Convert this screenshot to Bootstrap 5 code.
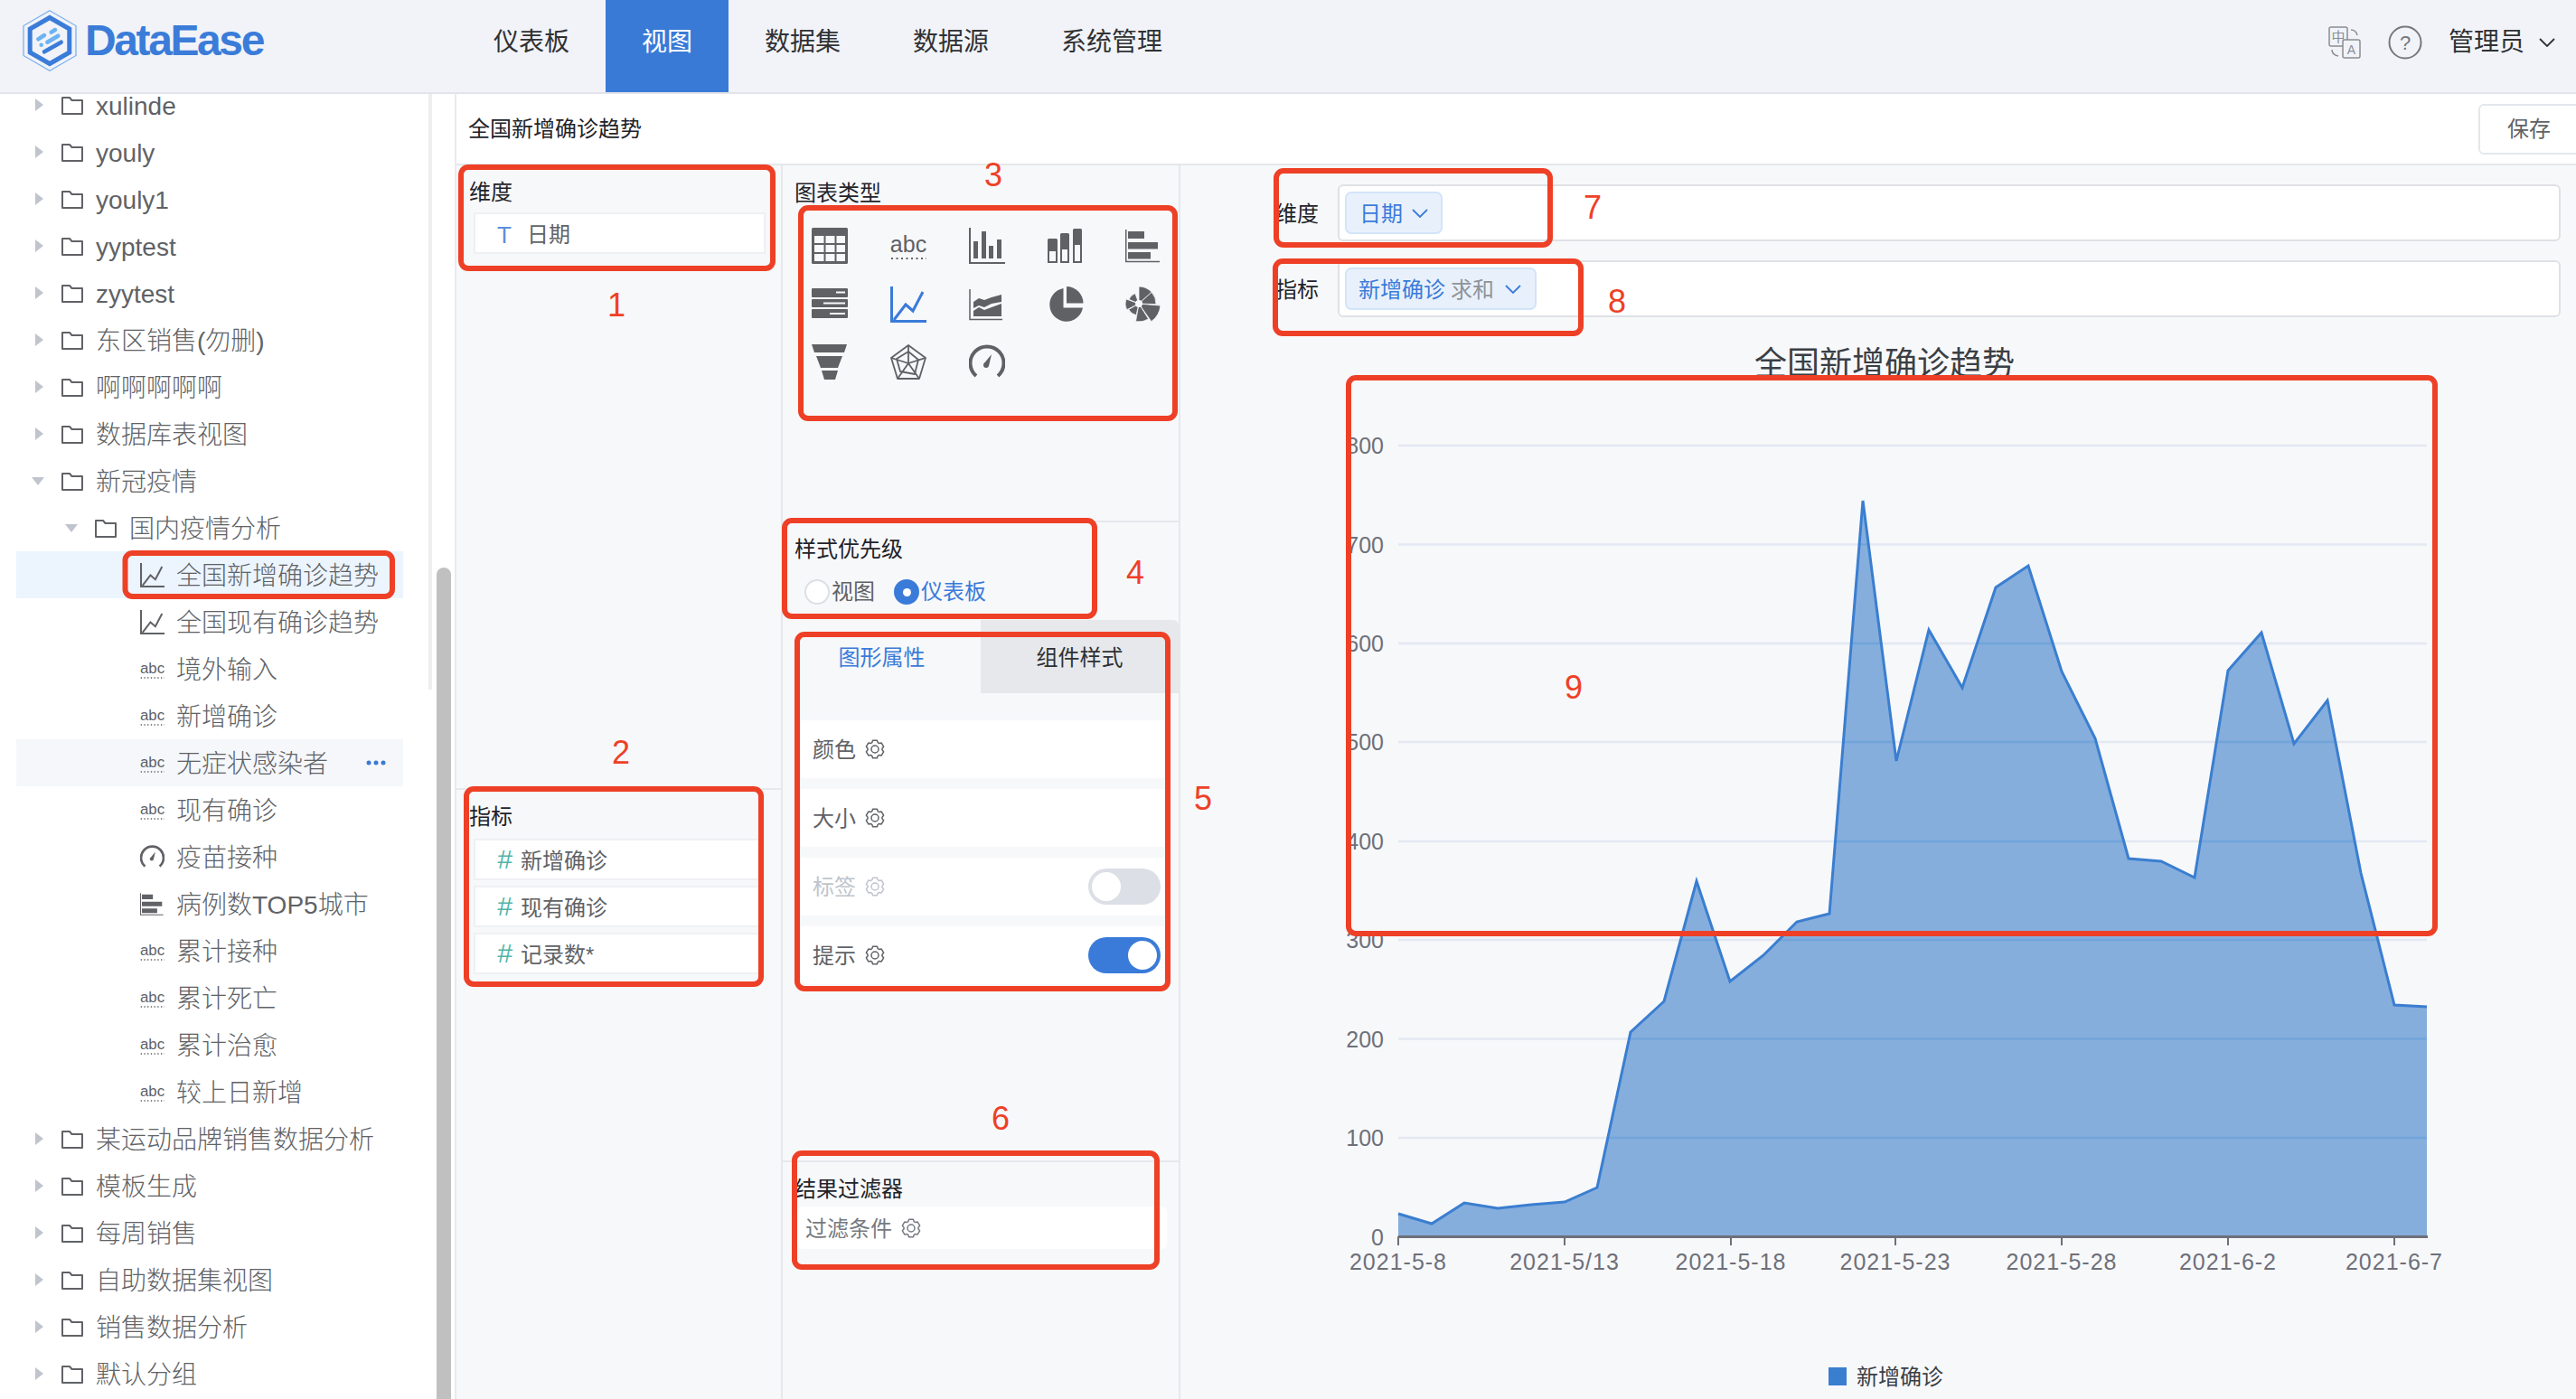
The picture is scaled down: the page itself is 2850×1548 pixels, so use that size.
<!DOCTYPE html>
<html lang="zh-CN">
<head>
<meta charset="utf-8">
<title>DataEase</title>
<link href="https://cdn.jsdelivr.net/npm/bootstrap@5.3.0/dist/css/bootstrap.min.css" rel="stylesheet">
<style>
html,body{height:1548px;width:2850px;overflow:hidden;margin:0}
body{position:relative;font-family:"Liberation Sans","Noto Sans CJK SC",sans-serif;font-size:24px;color:#1f2329;background:#fff}
.hdr{height:104px;background:#f1f3f8;border-bottom:2px solid #e2e4e9;padding:0;justify-content:flex-start}
.brand{width:506px;flex:none;height:102px;padding:0 0 13px 25px;gap:9px}
.brand-name{font-family:"Liberation Sans",sans-serif;font-weight:700;font-size:48px;letter-spacing:-2.4px;color:#3b7cd9;line-height:1;white-space:nowrap}
.hdr .navbar-nav .nav-link{height:102px;padding:0 40px 8px;font-size:28px;color:#303133;display:flex;align-items:center}
.hdr .navbar-nav .nav-link.active{background:#3a7ad7;color:#fff}
.hdr-right{margin-left:auto;padding:0 23px 8px 0;font-size:28px;color:#303133}
.ico-lang{margin-right:30px}
.ico-help{margin-right:29px}
.stage{height:1444px}
.side{width:505px;flex:none;overflow:hidden;background:#fff;border-right:2px solid #e8eaee}
.tree{width:474px;flex:none;padding:0 28px 0 18px;margin-top:-14px;height:1600px}
.tree .list-group-item{height:52px;padding:3px 0 0;border:0;background:transparent;color:#606266;font-size:28px;font-weight:300;display:flex;align-items:center;border-radius:0;white-space:nowrap}
.tree .list-group-item.is-sel{background:#ecf4fd}
.tree .list-group-item.is-hov{background:#f5f7fa}
.tree .lv0{padding-left:21px}
.tree .lv1{padding-left:58px}
.tree .lv2{padding-left:137px}
.tw{width:29px;flex:none;display:flex;margin-bottom:3px}
.tw.open svg{margin-left:-4px}
.fd{width:24px;height:21px;margin:0 14px 3px 0;flex:none;color:#606266}
.tk{width:27px;height:27px;margin:0 13px 3px 0;flex:none;color:#606266}
.dots{margin:0 19px 3px auto;width:22px;height:6px;color:#3a7ad7}
.gutter{flex:1;position:relative;padding:524px 0 0 9px}
.gutter::before{content:"";position:absolute;left:0;top:0;width:4px;height:659px;background:#eeeff1}
.sbar{display:block;width:16px;height:920px;background:#c0c0c0;border-radius:8px 8px 0 0}
.work{flex:1;min-width:0}
.titlebar{height:79px;flex:none;background:#fff;border-bottom:2px solid #e6e7ea;padding-left:13px;overflow:hidden}
.savebtn{margin:0 -12px 0 auto;width:120px;height:56px;padding:0 0 0 30px;text-align:left;background:#fff;border:2px solid #e4e7ed;border-radius:6px;color:#606266;font-size:24px;line-height:1}
.panes{flex:1;min-height:0;background:#f7f8fa}
.pane-fields{width:361px;flex:none;border-right:2px solid #e6e8ec}
.pane-types{width:440px;flex:none;border-right:2px solid #e6e8ec}
.pane-chart{flex:1;min-width:0}
.sec-a{height:691px;border-bottom:2px solid #e6e8ec;padding:12px 0 0 14px}
.sec-b{padding:12px 0 0 14px}
.cap{line-height:32px;height:32px;padding-top:2px;font-size:24px;color:#1f2329}
.fcard{width:318px;height:46px;margin-left:5px;background:#fff;border:2px solid #eef0f3;padding:3px 0 0 24px;color:#606266;line-height:1}
.fcard+.fcard{margin-top:6px}
.f1{margin-top:8px;width:323px}
.f2{margin-top:10px}
.ft{width:33px;flex:none;color:#5b8fd9;font-size:26px}
.fh{width:26px;flex:none;color:#4fb5a8;font-size:30px;font-style:italic;margin-bottom:3px}
.types{height:395px;border-bottom:2px solid #e6e8ec;padding:13px 0 0 13px}
.igrid{display:grid;grid-template-columns:repeat(5,86.75px);grid-auto-rows:64.5px;margin:12px 0 0 -4px;place-items:center}
.igrid svg{width:40px;height:40px;color:#5f6165}
.igrid svg.on{color:#3a7bd9}
.stylesec{height:708px;border-bottom:2px solid #e6e8ec;padding-top:12px}
.prio{padding-left:13px}
.radios{margin:19px 0 0 24px;height:28px;color:#606266;font-size:24px;line-height:1}
.rdo{width:28px;height:28px;border-radius:50%;flex:none;border:2px solid #dcdfe6;background:#fff;margin-right:2px}
.rdo.on{background:#3a7bd9;border-color:#3a7bd9;display:flex;align-items:center;justify-content:center}
.rdo.on::after{content:"";width:9px;height:9px;border-radius:50%;background:#fff}
.rtxt{margin-right:21px}
.rtxt-on{color:#3a7bd9}
.tabsbar{margin-top:17px;height:81px}
.tabsbar .nav-item{height:81px;line-height:32px;padding-top:26px;font-size:24px;text-align:center}
.tab-a{background:#f7f8fa;color:#3a7bd9;border-radius:6px 0 0 0}
.tab-b{background:#e6e8ec;color:#303133;border-radius:0 6px 0 0}
.props{padding:30px 14px 0 16px;display:flex;flex-direction:column;gap:12px}
.prop{height:64px;background:#fff;padding:2px 6px 0 17px;color:#606266;font-size:24px}
.prop.dim{color:#c0c4cc}
.gear{width:22px;height:22px;margin:0 0 2px 10px;flex:none}
.tgl{width:80px;height:40px;border-radius:20px;margin:0 0 2px auto;padding:0 4px;background:#dcdfe6;flex:none}
.tgl i{display:block;width:32px;height:32px;border-radius:50%;background:#fff}
.tgl.on{background:#3a7bd9;justify-content:flex-end}
.filters{padding:12px 0 0 13px}
.frow{height:47px;margin:5px 13px 0 3px;background:#fff;border-radius:6px;padding:2px 0 0 9px;color:#767a80}
.shelves{padding:21px 17px 0 105px}
.shelf{height:63px;line-height:1}
.shelf+.shelf{margin-top:21px}
.shelf-l{width:69px;flex:none;color:#1f2329;font-size:24px;padding-top:2px}
.shelf-b{flex:1;height:63px;background:#fff;border:2px solid #dfe1e6;border-radius:6px;padding:6px}
.pill{height:47px;background:#e8f1fb;border:2px solid #d3e4f9;border-radius:7px;color:#3a7bd9;font-size:24px;padding:2px 15px 0 13px;white-space:nowrap}
.pill small{font-size:24px;color:#909399;margin-left:6px}
.pill svg{width:18px;height:10px;margin:0 0 2px 12px}
.pill.p1{padding:2px 14px 0 14px}
.pill.p1 svg{margin-left:10px}
.plot{display:block;margin-top:19px;width:1544px;height:1178px}
.plot text{font-family:"Liberation Sans","Noto Sans CJK SC",sans-serif}
.marks{position:absolute;left:0;top:0;width:2850px;height:1548px;z-index:5;pointer-events:none}
.marks rect{fill:none;stroke:#ee4026;stroke-width:6}
.marks text{font-family:"Liberation Sans",sans-serif;font-size:36px;fill:#ee4026;text-anchor:middle}
.sprite{position:absolute;width:0;height:0;overflow:hidden}
</style>
</head>
<body>
<svg class="sprite" aria-hidden="true">
<defs>
<symbol id="folder" viewBox="0 0 24 21"><path d="M1 2h8l2.500 3H23v15H1z" fill="none" stroke="currentColor" stroke-width="2" stroke-linejoin="round"/></symbol>
<symbol id="ic-line" viewBox="0 0 40 40"><path d="M1.500 0V38.500H40" fill="none" stroke="currentColor" stroke-width="3"/><path d="M4 37 17 20l8 7L36 6" fill="none" stroke="currentColor" stroke-width="3"/></symbol>
<symbol id="ic-abc" viewBox="0 0 40 40"><text x="20" y="27" text-anchor="middle" font-family="Liberation Sans" font-size="25" fill="currentColor">abc</text><path d="M1 34H40" stroke="currentColor" stroke-width="2" stroke-dasharray="2 3.500"/></symbol>
<symbol id="ic-gauge" viewBox="0 0 40 40"><path d="M8 35A18.500 18.500 0 1 1 32 35" fill="none" stroke="currentColor" stroke-width="4"/><path d="M25 11 22 24 16.500 21.500z" fill="currentColor"/><circle cx="19" cy="23" r="3" fill="currentColor"/></symbol>
<symbol id="ic-hbar" viewBox="0 0 40 40"><path d="M.75 2V37.500H38" fill="none" stroke="currentColor" stroke-width="1.500"/><path d="M3 4h18v8H3zM3 16h33v7.500H3zM3 27h25v7.500H3z" fill="currentColor"/></symbol>
<symbol id="gear" viewBox="0 0 22 22"><path d="M13.420 1.300 14.250 3.700 15.700 4.530 18.190 4.050 20.610 8.240 18.960 10.160V11.840L20.610 13.760 18.190 17.950 15.700 17.470 14.250 18.300 13.420 20.700H8.580L7.750 18.300 6.300 17.470 3.810 17.950 1.390 13.760 3.040 11.840V10.160L1.390 8.240 3.810 4.050 6.300 4.530 7.750 3.700 8.580 1.300z" fill="none" stroke="currentColor" stroke-width="1.500" stroke-linejoin="round"/><circle cx="11" cy="11" r="4" fill="none" stroke="currentColor" stroke-width="1.500"/></symbol>
<symbol id="chev" viewBox="0 0 18 10"><path d="M1 1 9 9 17 1" fill="none" stroke="currentColor" stroke-width="1.800"/></symbol>
<symbol id="car-r" viewBox="0 0 9 14"><path d="M0 0 9 7 0 14z" fill="#c0c4cc"/></symbol>
<symbol id="car-d" viewBox="0 0 14 9"><path d="M0 0H14L7 9z" fill="#c0c4cc"/></symbol>
</defs>
</svg>

<header class="navbar navbar-expand hdr flex-nowrap align-items-stretch">
  <div class="brand d-flex align-items-center">
    <svg width="60" height="68" viewBox="0 0 60 68" aria-hidden="true">
      <path d="M30 .7 59 17.500V50.500L30 67.300 1 50.500V17.500z" fill="#f1f3f8" stroke="#7db2ec" stroke-width="1.300"/>
      <path d="M30 8.500 51.800 21V47L30 59.500 8.200 47V21z" fill="#f1f3f8" stroke="#3b7cd9" stroke-width="5"/>
      <path d="M31.700 24.700 36 22M17.300 32.300 24 28M27.300 35.700 39.300 28.700" stroke="#6db3f2" stroke-width="4.500" stroke-linecap="round" fill="none"/>
      <circle cx="20.700" cy="38.700" r="2.300" fill="#6db3f2"/>
      <path d="M24 46.300 42.700 35.700" stroke="#3b7cd9" stroke-width="4.500" stroke-linecap="round" fill="none"/>
    </svg>
    <span class="brand-name">DataEase</span>
  </div>
  <ul class="navbar-nav">
    <li class="nav-item"><a class="nav-link" href="#">仪表板</a></li>
    <li class="nav-item"><a class="nav-link active" href="#">视图</a></li>
    <li class="nav-item"><a class="nav-link" href="#">数据集</a></li>
    <li class="nav-item"><a class="nav-link" href="#">数据源</a></li>
    <li class="nav-item"><a class="nav-link" href="#">系统管理</a></li>
  </ul>
  <div class="hdr-right d-flex align-items-center">
    <svg class="ico-lang" width="36" height="36" viewBox="0 0 36 36" aria-hidden="true">
      <rect x="1" y="1" width="20" height="21" rx="2" fill="none" stroke="#8a8d92" stroke-width="1.500"/>
      <text x="11" y="17" text-anchor="middle" font-size="15" fill="#8a8d92" font-family="Noto Sans CJK SC">中</text>
      <rect x="16" y="15" width="19" height="20" rx="2" fill="#f1f3f8" stroke="#8a8d92" stroke-width="1.500"/>
      <text x="25.500" y="31" text-anchor="middle" font-size="14" fill="#8a8d92" font-family="Liberation Sans">A</text>
      <path d="M25 4c4 0 6 2 7 6M4 26c0 3 2 6 7 7" fill="none" stroke="#8a8d92" stroke-width="1.500"/>
    </svg>
    <svg class="ico-help" width="38" height="38" viewBox="0 0 38 38" aria-hidden="true">
      <circle cx="19" cy="19" r="17.500" fill="none" stroke="#75787d" stroke-width="2"/>
      <text x="19" y="27" text-anchor="middle" font-size="22" fill="#75787d" font-family="Liberation Sans">?</text>
    </svg>
    <span>管理员</span>
    <svg width="18" height="10" class="ms-3" aria-hidden="true"><use href="#chev"/></svg>
  </div>
</header>

<div class="d-flex stage">
  <aside class="side d-flex">
    <div class="list-group list-group-flush tree">
      <div class="list-group-item lv0"><span class="tw"><svg width="9" height="14"><use href="#car-r"/></svg></span><svg class="fd"><use href="#folder"/></svg>xulinde</div>
      <div class="list-group-item lv0"><span class="tw"><svg width="9" height="14"><use href="#car-r"/></svg></span><svg class="fd"><use href="#folder"/></svg>youly</div>
      <div class="list-group-item lv0"><span class="tw"><svg width="9" height="14"><use href="#car-r"/></svg></span><svg class="fd"><use href="#folder"/></svg>youly1</div>
      <div class="list-group-item lv0"><span class="tw"><svg width="9" height="14"><use href="#car-r"/></svg></span><svg class="fd"><use href="#folder"/></svg>yyptest</div>
      <div class="list-group-item lv0"><span class="tw"><svg width="9" height="14"><use href="#car-r"/></svg></span><svg class="fd"><use href="#folder"/></svg>zyytest</div>
      <div class="list-group-item lv0"><span class="tw"><svg width="9" height="14"><use href="#car-r"/></svg></span><svg class="fd"><use href="#folder"/></svg>东区销售(勿删)</div>
      <div class="list-group-item lv0"><span class="tw"><svg width="9" height="14"><use href="#car-r"/></svg></span><svg class="fd"><use href="#folder"/></svg>啊啊啊啊啊</div>
      <div class="list-group-item lv0"><span class="tw"><svg width="9" height="14"><use href="#car-r"/></svg></span><svg class="fd"><use href="#folder"/></svg>数据库表视图</div>
      <div class="list-group-item lv0"><span class="tw open"><svg width="14" height="9"><use href="#car-d"/></svg></span><svg class="fd"><use href="#folder"/></svg>新冠疫情</div>
      <div class="list-group-item lv1"><span class="tw open"><svg width="14" height="9"><use href="#car-d"/></svg></span><svg class="fd"><use href="#folder"/></svg>国内疫情分析</div>
      <div class="list-group-item lv2 is-sel"><svg class="tk"><use href="#ic-line"/></svg>全国新增确诊趋势</div>
      <div class="list-group-item lv2"><svg class="tk"><use href="#ic-line"/></svg>全国现有确诊趋势</div>
      <div class="list-group-item lv2"><svg class="tk"><use href="#ic-abc"/></svg>境外输入</div>
      <div class="list-group-item lv2"><svg class="tk"><use href="#ic-abc"/></svg>新增确诊</div>
      <div class="list-group-item lv2 is-hov"><svg class="tk"><use href="#ic-abc"/></svg>无症状感染者<svg class="dots" viewBox="0 0 22 6"><circle cx="3" cy="3" r="2.500" fill="currentColor"/><circle cx="11" cy="3" r="2.500" fill="currentColor"/><circle cx="19" cy="3" r="2.500" fill="currentColor"/></svg></div>
      <div class="list-group-item lv2"><svg class="tk"><use href="#ic-abc"/></svg>现有确诊</div>
      <div class="list-group-item lv2"><svg class="tk"><use href="#ic-gauge"/></svg>疫苗接种</div>
      <div class="list-group-item lv2"><svg class="tk"><use href="#ic-hbar"/></svg>病例数TOP5城市</div>
      <div class="list-group-item lv2"><svg class="tk"><use href="#ic-abc"/></svg>累计接种</div>
      <div class="list-group-item lv2"><svg class="tk"><use href="#ic-abc"/></svg>累计死亡</div>
      <div class="list-group-item lv2"><svg class="tk"><use href="#ic-abc"/></svg>累计治愈</div>
      <div class="list-group-item lv2"><svg class="tk"><use href="#ic-abc"/></svg>较上日新增</div>
      <div class="list-group-item lv0"><span class="tw"><svg width="9" height="14"><use href="#car-r"/></svg></span><svg class="fd"><use href="#folder"/></svg>某运动品牌销售数据分析</div>
      <div class="list-group-item lv0"><span class="tw"><svg width="9" height="14"><use href="#car-r"/></svg></span><svg class="fd"><use href="#folder"/></svg>模板生成</div>
      <div class="list-group-item lv0"><span class="tw"><svg width="9" height="14"><use href="#car-r"/></svg></span><svg class="fd"><use href="#folder"/></svg>每周销售</div>
      <div class="list-group-item lv0"><span class="tw"><svg width="9" height="14"><use href="#car-r"/></svg></span><svg class="fd"><use href="#folder"/></svg>自助数据集视图</div>
      <div class="list-group-item lv0"><span class="tw"><svg width="9" height="14"><use href="#car-r"/></svg></span><svg class="fd"><use href="#folder"/></svg>销售数据分析</div>
      <div class="list-group-item lv0"><span class="tw"><svg width="9" height="14"><use href="#car-r"/></svg></span><svg class="fd"><use href="#folder"/></svg>默认分组</div>
    </div>
    <div class="gutter"><span class="sbar"></span></div>
  </aside>

  <main class="work d-flex flex-column">
    <div class="titlebar d-flex align-items-center">
      <span>全国新增确诊趋势</span>
      <button type="button" class="btn savebtn">保存</button>
    </div>
    <div class="panes d-flex">
      <section class="pane-fields">
        <div class="sec-a">
          <div class="cap">维度</div>
          <div class="fcard f1 d-flex align-items-center"><span class="ft">T</span>日期</div>
        </div>
        <div class="sec-b">
          <div class="cap">指标</div>
          <div class="fcard f2 d-flex align-items-center"><span class="fh">#</span>新增确诊</div>
          <div class="fcard d-flex align-items-center"><span class="fh">#</span>现有确诊</div>
          <div class="fcard d-flex align-items-center"><span class="fh">#</span>记录数*</div>
        </div>
      </section>

      <section class="pane-types">
        <div class="types">
          <div class="cap">图表类型</div>
          <div class="igrid">
            <svg viewBox="0 0 40 40"><rect width="40" height="40" rx="1.500" fill="currentColor"/><path d="M3 9h10.500v8H3zM15.500 9h10v8h-10zM27.500 9H37v8h-9.500zM3 19h10.500v8H3zM15.500 19h10v8h-10zM27.500 19H37v8h-9.500zM3 29h10.500v8H3zM15.500 29h10v8h-10zM27.500 29H37v8h-9.500z" fill="#f7f8fa"/></svg>
            <svg viewBox="0 0 40 40"><use href="#ic-abc"/></svg>
            <svg viewBox="0 0 40 40"><path d="M1 0V39H40" fill="none" stroke="currentColor" stroke-width="2"/><path d="M5 15h5v19H5zM14 4h5v30h-5zM22 20h5v14h-5zM31 13h5v21h-5z" fill="currentColor"/></svg>
            <svg viewBox="0 0 40 40"><path d="M1.500 12h8a1.500 1.500 0 0 1 1.500 1.500V25H0V13.500A1.500 1.500 0 0 1 1.500 12zM15.500 6h7a1.500 1.500 0 0 1 1.500 1.500V23H14V7.500A1.500 1.500 0 0 1 15.500 6zM29.500 1h7A1.500 1.500 0 0 1 38 2.500V18H28V2.500A1.500 1.500 0 0 1 29.500 1z" fill="currentColor"/><path d="M1 25h9v13H1zM15 23h8v15h-8zM29 18h8v20h-8z" fill="none" stroke="currentColor" stroke-width="2"/></svg>
            <svg viewBox="0 0 40 40"><use href="#ic-hbar"/></svg>
            <svg viewBox="0 0 40 40"><rect y="2" width="40" height="10" rx="1" fill="currentColor"/><rect y="14" width="40" height="9" rx="1" fill="currentColor"/><rect y="25" width="40" height="10" rx="1" fill="currentColor"/><path d="M27 6.500H37M13 18.500H37M20 30H37" stroke="#f7f8fa" stroke-width="2"/></svg>
            <svg class="on" viewBox="0 0 40 40"><use href="#ic-line"/></svg>
            <svg viewBox="0 0 40 40"><path d="M1 3V36.500H37" fill="none" stroke="currentColor" stroke-width="1.500"/><path d="M5 17 11 13l6 2 8-3 11-3v8l-11 2-8 4-6-2-6 3zM5 27 11 23l6 3 8-3 11-4v14H5z" fill="currentColor"/></svg>
            <svg viewBox="0 0 40 40"><path d="M17.500 2A18.500 18.500 0 1 0 39 23.500H17.500z" fill="currentColor"/><path d="M21 0A18.500 18.500 0 0 1 39.500 18.500H21z" fill="currentColor"/></svg>
            <svg viewBox="0 0 40 40"><g fill="currentColor" stroke="#f7f8fa" stroke-width=".8"><path d="M15 19 15 0A19 19 0 0 1 29.100 6.300z"/><path d="M15 19 29.100 6.300A19 19 0 0 1 34 19.700z"/><path d="M15 19 38.900 21.100A24 24 0 0 1 28.800 38.700z"/><path d="M15 19 25.600 36A20 20 0 0 1 11.500 38.700z"/><path d="M15 19 12.100 31.700A13 13 0 0 1 3.700 25.500z"/><path d="M15 19 1.600 25.800A15 15 0 0 1 .9 13.900z"/><path d="M15 19 4 14.300A12 12 0 0 1 10.900 7.700z"/></g><circle cx="15" cy="19" r="4" fill="#f7f8fa"/></svg>
            <svg viewBox="0 0 40 40"><path d="M0 0H39L36 9H3zM5 13H34L29 26H10zM11 29H29L26 39H14z" fill="currentColor"/></svg>
            <svg viewBox="0 0 40 40"><g fill="none" stroke="currentColor" stroke-width="1.800" stroke-linejoin="round"><path d="M20 1 39 15 32 38H8L1 15z"/><path d="M20 21V1M20 21 39 15M20 21 32 38M20 21 8 38M20 21 1 15"/><path d="M20 8 31 17 27 33 11 30 7 16z"/></g></svg>
            <svg viewBox="0 0 40 40"><use href="#ic-gauge"/></svg>
          </div>
        </div>
        <div class="stylesec">
          <div class="prio">
            <div class="cap">样式优先级</div>
          </div>
          <div class="radios d-flex align-items-center">
            <span class="rdo"></span><span class="rtxt">视图</span>
            <span class="rdo on"></span><span class="rtxt-on">仪表板</span>
          </div>
          <ul class="nav nav-fill tabsbar">
            <li class="nav-item tab-a">图形属性</li>
            <li class="nav-item tab-b">组件样式</li>
          </ul>
          <div class="props">
            <div class="prop d-flex align-items-center">颜色<svg class="gear"><use href="#gear"/></svg></div>
            <div class="prop d-flex align-items-center">大小<svg class="gear"><use href="#gear"/></svg></div>
            <div class="prop dim d-flex align-items-center">标签<svg class="gear"><use href="#gear"/></svg><span class="tgl d-flex align-items-center"><i></i></span></div>
            <div class="prop d-flex align-items-center">提示<svg class="gear"><use href="#gear"/></svg><span class="tgl on d-flex align-items-center"><i></i></span></div>
          </div>
        </div>
        <div class="filters">
          <div class="cap">结果过滤器</div>
          <div class="frow d-flex align-items-center">过滤条件<svg class="gear"><use href="#gear"/></svg></div>
        </div>
      </section>

      <section class="pane-chart">
        <div class="shelves">
          <div class="shelf d-flex align-items-center">
            <span class="shelf-l">维度</span>
            <div class="shelf-b d-flex"><span class="pill p1 d-inline-flex align-items-center">日期<svg><use href="#chev"/></svg></span></div>
          </div>
          <div class="shelf d-flex align-items-center">
            <span class="shelf-l">指标</span>
            <div class="shelf-b d-flex"><span class="pill d-inline-flex align-items-center">新增确诊<small>求和</small><svg><use href="#chev"/></svg></span></div>
          </div>
        </div>
        <svg class="plot" viewBox="1306 370 1544 1178" role="img" aria-label="全国新增确诊趋势">
          <defs>
            <clipPath id="areaClip"><polygon points="1547,1343 1584,1354 1620,1331 1657,1337 1694,1333 1731,1330 1767,1314 1804,1142 1841,1108 1877,975 1914,1086 1951,1057 1988,1020 2024,1011 2061,554 2098,842 2134,697 2171,761 2208,650 2244,626 2281,743 2318,817 2355,950 2391,953 2428,971 2465,742 2502,700 2538,823 2575,775 2612,966 2649,1112 2685,1114 2685,1368 1547,1368"/></clipPath>
          </defs>
          <text x="2085" y="415" text-anchor="middle" font-size="36" fill="#3a3f45">全国新增确诊趋势</text>
          <g stroke="#e3e8f2" stroke-width="2.500">
            <path d="M1547 493H2685M1547 602.500H2685M1547 712H2685M1547 821H2685M1547 931H2685M1547 1040H2685M1547 1149.500H2685M1547 1259H2685"/>
          </g>
          <polygon fill="#85aedd" points="1547,1343 1584,1354 1620,1331 1657,1337 1694,1333 1731,1330 1767,1314 1804,1142 1841,1108 1877,975 1914,1086 1951,1057 1988,1020 2024,1011 2061,554 2098,842 2134,697 2171,761 2208,650 2244,626 2281,743 2318,817 2355,950 2391,953 2428,971 2465,742 2502,700 2538,823 2575,775 2612,966 2649,1112 2685,1114 2685,1368 1547,1368"/>
          <g stroke="#72a4da" stroke-width="2.500" clip-path="url(#areaClip)">
            <path d="M1547 493H2685M1547 602.500H2685M1547 712H2685M1547 821H2685M1547 931H2685M1547 1040H2685M1547 1149.500H2685M1547 1259H2685"/>
          </g>
          <polyline fill="none" stroke="#3a7ed0" stroke-width="3" points="1547,1343 1584,1354 1620,1331 1657,1337 1694,1333 1731,1330 1767,1314 1804,1142 1841,1108 1877,975 1914,1086 1951,1057 1988,1020 2024,1011 2061,554 2098,842 2134,697 2171,761 2208,650 2244,626 2281,743 2318,817 2355,950 2391,953 2428,971 2465,742 2502,700 2538,823 2575,775 2612,966 2649,1112 2685,1114"/>
          <path d="M1547 1368.500H2686" stroke="#6e7079" stroke-width="3"/>
          <path d="M1547 1368V1378M1731 1368V1378M1915 1368V1378M2097 1368V1378M2281 1368V1378M2465 1368V1378M2649 1368V1378" stroke="#6e7079" stroke-width="2"/>
          <g font-size="25" fill="#6e7079" text-anchor="end">
            <text x="1531" y="502">800</text><text x="1531" y="611.500">700</text><text x="1531" y="721">600</text><text x="1531" y="830">500</text><text x="1531" y="940">400</text><text x="1531" y="1049">300</text><text x="1531" y="1158.500">200</text><text x="1531" y="1268">100</text><text x="1531" y="1377.500">0</text>
          </g>
          <g font-size="25" fill="#6e7079" text-anchor="middle" letter-spacing="1">
            <text x="1547" y="1405">2021-5-8</text><text x="1731" y="1405">2021-5/13</text><text x="1915" y="1405">2021-5-18</text><text x="2097" y="1405">2021-5-23</text><text x="2281" y="1405">2021-5-28</text><text x="2465" y="1405">2021-6-2</text><text x="2649" y="1405">2021-6-7</text>
          </g>
          <rect x="2023" y="1513" width="20" height="20" fill="#3a7ed0"/>
          <text x="2054" y="1532" font-size="24" fill="#3a3f45">新增确诊</text>
        </svg>
      </section>
    </div>
  </main>
</div>

<svg class="marks" viewBox="0 0 2850 1548" aria-hidden="true">
  <rect x="138.500" y="612" width="295.500" height="48" rx="8"/>
  <rect x="510" y="185" width="345" height="112" rx="8"/>
  <rect x="516" y="873" width="326" height="216" rx="8"/>
  <rect x="886" y="230" width="414" height="233" rx="8"/>
  <rect x="868" y="576" width="343" height="106" rx="8"/>
  <rect x="882" y="702" width="410" height="392" rx="8"/>
  <rect x="879" y="1276" width="401" height="126" rx="8"/>
  <rect x="1412" y="189" width="303" height="82" rx="8"/>
  <rect x="1411" y="289" width="338" height="80" rx="8"/>
  <rect x="1492" y="418" width="1202" height="615" rx="8"/>
  <text x="682" y="350">1</text>
  <text x="687" y="845">2</text>
  <text x="1099" y="206">3</text>
  <text x="1256" y="646">4</text>
  <text x="1331" y="896">5</text>
  <text x="1107" y="1250">6</text>
  <text x="1762" y="242">7</text>
  <text x="1789" y="346">8</text>
  <text x="1741" y="773">9</text>
</svg>
<script src="https://cdn.jsdelivr.net/npm/bootstrap@5.3.0/dist/js/bootstrap.bundle.min.js"></script>
</body>
</html>
